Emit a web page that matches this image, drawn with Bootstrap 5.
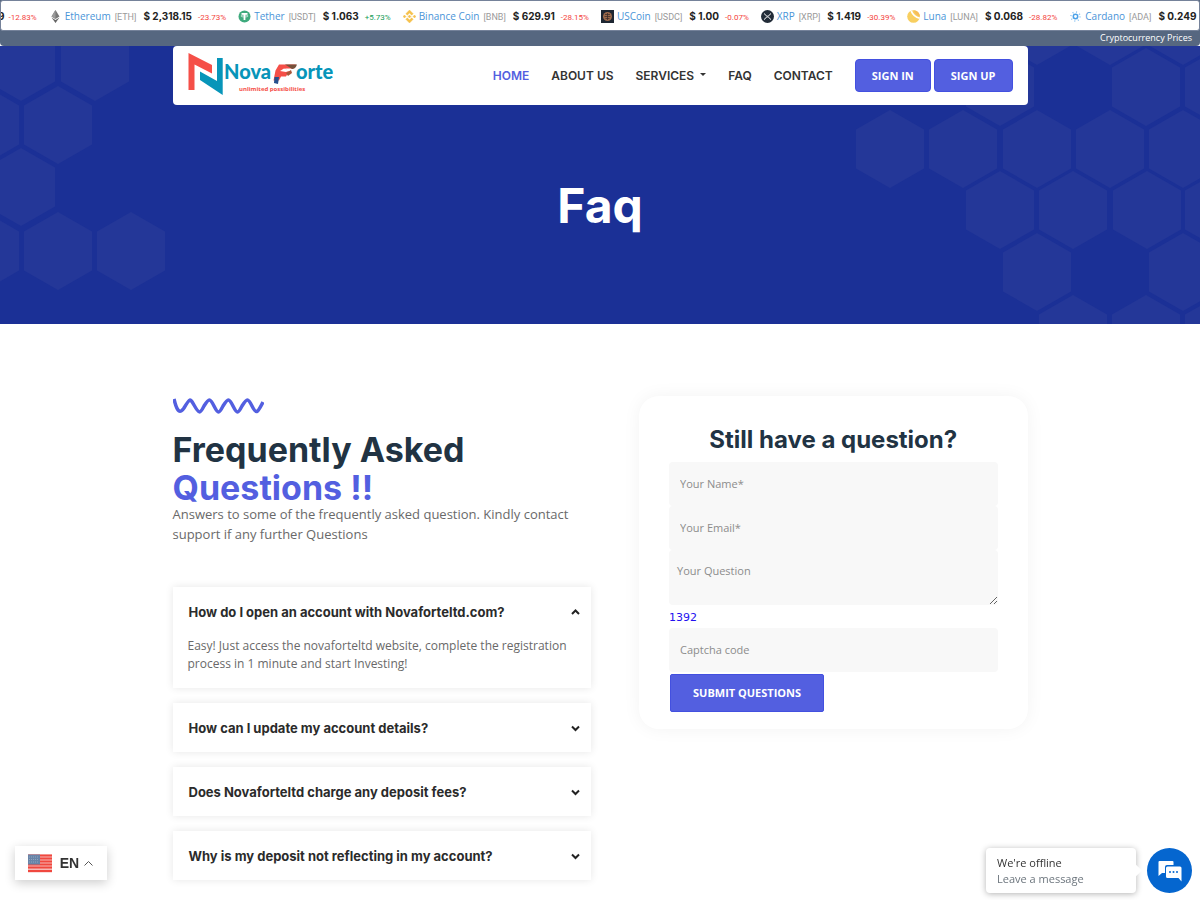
<!DOCTYPE html>
<html lang="en">
<head>
<meta charset="utf-8">
<meta name="viewport" content="width=device-width, initial-scale=1">
<title>NovaForte - Faq</title>
<link href="https://cdn.jsdelivr.net/npm/bootstrap@5.3.0/dist/css/bootstrap.min.css" rel="stylesheet">
<style>
:root{--brand:#535fe0;--ink:#213343;--text:#696969;--deep:#1b3096}
body{font-family:"Open Sans","Noto Sans",sans-serif;font-size:13px;color:var(--text);background:#fff}
.wrap{width:100%;max-width:855px;margin-inline:auto}
a{text-decoration:none}

/* price ticker */
.ticker{background:#566780;border-radius:0 0 4px 4px}
.ticker-track{height:31px;background:#fff;border:1px solid #75829a;border-radius:3px;overflow:hidden;white-space:nowrap;padding-top:2px}
.coin{flex:none;line-height:14px}
.coin:first-child{margin-left:-3px}
.coin svg{width:13px;height:13px;margin-right:3px}
.coin a{font-size:10px;color:#4a94d8;margin-right:4px}
.coin .sym{font-size:9px;font-family:Roboto,sans-serif;color:#9a9a9a;margin-right:7px}
.coin .price{font-family:Inter,sans-serif;font-size:10px;font-weight:700;color:#222;margin-right:6px}
.coin:first-child .price{margin-right:4px}
.coin .chg{font-family:Roboto,sans-serif;font-size:8px;color:#f4433c}
.coin .chg.up{color:#159c56}
.ticker-foot{height:15px;line-height:14px;font-size:9px;color:#fff;text-align:right;padding-right:8px}

/* hero */
.hero{background:var(--deep);height:278px;overflow:hidden}
.hexes{position:absolute;top:0;height:278px;fill:#243798}
.topnav{height:59px;padding:0 15px;border-radius:4px;background:#fff;position:relative}
.topnav .nav-link{padding:0;font:600 12px/20px Inter,sans-serif;color:#333}
.topnav .nav-link.active{color:var(--brand)}
.topnav .dropdown-toggle::after{margin-left:6px}
.topnav .menu{gap:22px}
.btn-brand{background:var(--brand);border:1px solid #4350e0;color:#fff;font-weight:700;border-radius:4px}
.btn-brand:hover{background:#4350e0;color:#fff}
.btn-sign{font-size:11px;height:33px;padding:0 16px;line-height:30px}
.sign-pair{gap:3px}
.hero h1{font:700 48px/58px Inter,sans-serif;color:#fff;margin:72px 0 0;text-align:center;position:relative}

/* faq */
.faq-grid{display:grid;grid-template-columns:418fr 388fr;gap:48px;padding:72px 0 20px;align-items:start}
.faq-grid h2{font:700 34px/38px Inter,sans-serif;color:var(--ink);margin:16px 0 0}
.faq-grid h2 span{color:var(--brand)}
.lead-in{line-height:20px;margin:-3px 0 43px}
.faq-item{border:0;border-radius:0;box-shadow:0 0 8px rgba(0,0,0,.1);background:#fff}
.faq-item+.faq-item{margin-top:15px}
.faq-q{height:49px;width:100%;border:0;background:none;padding:0 10px 0 16px;font:700 13px/20px Inter,sans-serif;color:#2b2b2b;text-align:left}
.faq-a{font-size:12px;line-height:18px;padding:1px 15px 15px}
.ask{border-radius:20px;box-shadow:0 0 18px rgba(0,0,0,.05);padding:30px 30px 17px;background:#fff}
.ask h3{font:700 24px/28px Inter,sans-serif;color:var(--ink);text-align:center;margin:0 0 8px}
.ask .form-control{background:#f8f8f8;border:0;border-radius:4px;font-size:11px;height:44px;padding:0 11px 2px}
.ask textarea.form-control{height:55px;min-height:55px;padding:12px 8px;line-height:18px;display:block}
.ask .form-control::placeholder{color:#8c8c8c;opacity:1}
.captcha{display:block;font:11px/23px "DejaVu Sans",sans-serif;color:#2310f0;height:23px;padding-top:1px}
.btn-send{font-size:11px;height:38px;border-radius:2px;padding:0 22px;margin:2px 0 0 1px}

/* floating widgets */
.lang{position:fixed;left:15px;bottom:20px;height:34px;width:92px;border:0;background:#fff;box-shadow:0 3px 10px rgba(0,0,0,.2);font:700 14px/20px "Liberation Sans",sans-serif;color:#333}
.chat{position:fixed;right:8px;bottom:7px;gap:11px}
.chat-note{width:150px;height:45px;border-radius:4px;background:#fff;box-shadow:0 1px 6px rgba(0,0,0,.3);padding:7px 11px;line-height:16px;font-size:11px;color:#333;position:relative}
.chat-note::after{content:"";position:absolute;right:-4px;top:18px;width:9px;height:9px;background:#fff;transform:rotate(45deg)}
.chat-btn{width:45px;height:45px;border:0;border-radius:50%;background:#0566cf}
</style>
</head>
<body>
<div class="ticker">
  <div class="ticker-track d-flex align-items-center">
    <div class="coin"><span class="price">9</span><span class="chg">-12.83%</span></div>
    <div class="coin ms-2 ps-1"><svg viewBox="0 0 13 13"><path d="M6.500 0 10.500 6.600 6.500 9 2.500 6.600Z" fill="#777"/><path d="M6.500 0V9L2.500 6.600Z" fill="#9a9a9a"/><path d="M2.500 7.500 6.500 10l4-2.500-4 5.500Z" fill="#666"/></svg><a href="#">Ethereum</a><span class="sym">[ETH]</span><span class="price">$ 2,318.15</span><span class="chg">-23.73%</span></div>
    <div class="coin ms-2 ps-1"><svg viewBox="0 0 13 13"><circle cx="6.500" cy="6.500" r="6" fill="#3eaa7d"/><path d="M3.500 3h6v1.700H7.400V10H5.600V4.700H3.500Z" fill="#fff"/><ellipse cx="6.500" cy="6" rx="3.600" ry="1" fill="none" stroke="#fff" stroke-width=".6"/></svg><a href="#">Tether</a><span class="sym">[USDT]</span><span class="price">$ 1.063</span><span class="chg up">+5.73%</span></div>
    <div class="coin ms-2 ps-1"><svg viewBox="0 0 13 13" fill="#f6c14b" stroke="#f6c14b" stroke-width=".4"><path d="m6.500 0 3.700 3.700-1.500 1.500-2.200-2.200-2.200 2.200-1.500-1.500ZM1.500 5l1.500 1.500L1.500 8 0 6.500ZM11.500 5 13 6.500 11.500 8 10 6.500ZM6.500 5 8 6.500 6.500 8 5 6.500ZM6.500 13 2.800 9.300l1.500-1.500L6.500 10l2.200-2.200 1.500 1.500Z"/></svg><a href="#">Binance Coin</a><span class="sym">[BNB]</span><span class="price">$ 629.91</span><span class="chg">-28.15%</span></div>
    <div class="coin ms-2 ps-1"><svg viewBox="0 0 13 13"><path d="M0 0h13v13H0z" fill="#1d2632"/><circle cx="6.500" cy="6.500" r="4.500" fill="#9b694b"/><path d="M4 4.500h5M3.500 6.500h6M4.500 8.500h4M6.500 3v7" stroke="#3a2b28" stroke-width=".7"/></svg><a href="#">USCoin</a><span class="sym">[USDC]</span><span class="price">$ 1.00</span><span class="chg">-0.07%</span></div>
    <div class="coin ms-2 ps-1"><svg viewBox="0 0 13 13"><circle cx="6.500" cy="6.500" r="6.500" fill="#222c38"/><path d="M3 3.500 5.300 5.700q1.200 1 2.400 0L10 3.500M3 9.600l2.300-2.200q1.200-1 2.400 0L10 9.600" fill="none" stroke="#fff" stroke-width="1"/></svg><a href="#">XRP</a><span class="sym">[XRP]</span><span class="price">$ 1.419</span><span class="chg">-30.39%</span></div>
    <div class="coin ms-2 ps-1"><svg viewBox="0 0 13 13"><circle cx="6.500" cy="6.500" r="6.300" fill="#f8cf60"/><path d="M3.500 1.500Q6 7.500 12.500 9L13 7.500Q7 6 5 .5Z" fill="#fff"/><path d="M6.500.3Q8 5 13 6.500A7 7 0 0 0 6.500.3Z" fill="#f6bd58"/></svg><a href="#">Luna</a><span class="sym">[LUNA]</span><span class="price">$ 0.068</span><span class="chg">-28.82%</span></div>
    <div class="coin ms-2 ps-1"><svg viewBox="0 0 13 13" fill="none" stroke="#4aa1e8"><circle cx="6.500" cy="6.500" r="2.200" stroke-width="1.500"/><circle cx="6.500" cy="6.500" r="4.500" stroke-dasharray="1 2.530" stroke-width="1.600" stroke="#8cc4f2"/></svg><a href="#">Cardano</a><span class="sym">[ADA]</span><span class="price">$ 0.249</span><span class="chg">-31.06%</span></div>
  </div>
  <div class="ticker-foot">Cryptocurrency Prices</div>
</div>

<header class="hero position-relative">
  <svg width="0" height="0" class="position-absolute"><defs><path id="hex" d="M0-39 34-19.500v39L0 39-34 19.500v-39Z"/></defs></svg>
  <svg class="hexes start-0" width="170" viewBox="0 46 170 278">
    <use href="#hex" x="21" y="62"/><use href="#hex" x="95" y="62"/><use href="#hex" x="-15" y="125"/><use href="#hex" x="58" y="125"/><use href="#hex" x="21" y="187"/><use href="#hex" x="-15" y="251"/><use href="#hex" x="58" y="251"/><use href="#hex" x="131" y="251"/>
  </svg>
  <svg class="hexes end-0" width="350" viewBox="850 46 350 278">
    <use href="#hex" x="1037" y="26"/><use href="#hex" x="1110" y="26"/><use href="#hex" x="1183" y="26"/>
    <use href="#hex" x="1000" y="87"/><use href="#hex" x="1146" y="87"/><use href="#hex" x="1219" y="87"/>
    <use href="#hex" x="890" y="149"/><use href="#hex" x="963" y="149"/><use href="#hex" x="1037" y="149"/><use href="#hex" x="1110" y="149"/><use href="#hex" x="1183" y="149"/>
    <use href="#hex" x="1000" y="210"/><use href="#hex" x="1073" y="210"/><use href="#hex" x="1147" y="210"/><use href="#hex" x="1219" y="210"/>
    <use href="#hex" x="1037" y="272"/><use href="#hex" x="1183" y="272"/>
    <use href="#hex" x="1073" y="334"/><use href="#hex" x="1146" y="334"/><use href="#hex" x="1219" y="334"/>
  </svg>
  <nav class="topnav wrap d-flex align-items-center justify-content-between" aria-label="Main">
    <a href="#" aria-label="NovaForte">
      <svg width="148" height="46" viewBox="188 53 148 46" class="d-block">
        <path d="M187.500 53 211 65v8.500l-17.500-9V90h-6Z" fill="#f54f48" transform="translate(1)"/>
        <path d="M199 71.500 216 81V58h5.700v37L199 80Z" fill="#0795b9" transform="translate(1)"/>
        <g font-family="Lato,sans-serif" font-weight="900" font-size="20" fill="#0795b9"><text x="224" y="79">Nova</text><text x="296" y="79">orte</text></g>
        <path d="M279 64.500h17l-3 4h-8l4 3-3 5h-5l-2 4h-5.500l2-10Z" fill="#f54f48"/>
        <path d="M285 64.500h12q-1.500 4.500-5 4.500l-3-2Z" fill="#76513b"/>
        <path d="m286 73 5-3 1 3-4 3Z" fill="#a8573b"/>
        <path d="m280 71 4-2.500 6 2-4 1.500Z" fill="#fff"/>
        <path d="M274.500 77h4.500l-1 7-4-1Z" fill="#254f8d"/>
        <text x="239" y="91" font-family="Open Sans,sans-serif" font-size="6" font-weight="700" fill="#f54f48">unlimited possibilities</text>
      </svg>
    </a>
    <div class="menu d-flex align-items-center">
      <a class="nav-link active" href="#">HOME</a>
      <a class="nav-link" href="#">ABOUT US</a>
      <a class="nav-link dropdown-toggle" href="#">SERVICES</a>
      <a class="nav-link" href="#">FAQ</a>
      <a class="nav-link" href="#">CONTACT</a>
      <div class="d-flex sign-pair">
        <button class="btn btn-brand btn-sign">SIGN IN</button><button class="btn btn-brand btn-sign">SIGN UP</button>
      </div>
    </div>
  </nav>
  <h1>Faq</h1>
</header>

<main class="wrap faq-grid">
  <section>
    <svg class="d-block" width="91" height="19" viewBox="0 0 91 19"><path d="M1 3C4 16 7 18 11 12 17 2 17 2 21 9 26 18 27 18 31 10 36 2 37 2 41 10 45 18 46 18 50 10 55 2 56 2 60 10 64 18 65 18 69 10 74 2 75 2 79 10 83 18 84 18 90 6" fill="none" stroke="#535fe0" stroke-width="3.500"/></svg>
    <h2>Frequently Asked<br><span>Questions !!</span></h2>
    <p class="lead-in">Answers to some of the frequently asked question. Kindly contact<br>support if any further Questions</p>
    <div class="faq-item">
      <button class="faq-q d-flex align-items-center justify-content-between" aria-expanded="true">How do I open an account with Novaforteltd.com?<svg width="11" height="10" viewBox="0 0 11 10"><path d="m2 7 3.500-3.500L9 7" fill="none" stroke="#222" stroke-width="2"/></svg></button>
      <div class="faq-a">Easy! Just access the novaforteltd website, complete the registration process in 1 minute and start Investing!</div>
    </div>
    <div class="faq-item">
      <button class="faq-q d-flex align-items-center justify-content-between" aria-expanded="false">How can I update my account details?<svg width="11" height="10" viewBox="0 0 11 10"><path d="M2 3.500 5.500 7 9 3.500" fill="none" stroke="#222" stroke-width="2"/></svg></button>
    </div>
    <div class="faq-item">
      <button class="faq-q d-flex align-items-center justify-content-between" aria-expanded="false">Does Novaforteltd charge any deposit fees?<svg width="11" height="10" viewBox="0 0 11 10"><path d="M2 3.500 5.500 7 9 3.500" fill="none" stroke="#222" stroke-width="2"/></svg></button>
    </div>
    <div class="faq-item">
      <button class="faq-q d-flex align-items-center justify-content-between" aria-expanded="false">Why is my deposit not reflecting in my account?<svg width="11" height="10" viewBox="0 0 11 10"><path d="M2 3.500 5.500 7 9 3.500" fill="none" stroke="#222" stroke-width="2"/></svg></button>
    </div>
  </section>

  <form class="ask">
    <h3>Still have a question?</h3>
    <input class="form-control" type="text" placeholder="Your Name*" aria-label="Your Name">
    <input class="form-control" type="email" placeholder="Your Email*" aria-label="Your Email">
    <textarea class="form-control" placeholder="Your Question" aria-label="Your Question"></textarea>
    <label class="captcha" for="captcha">1392</label>
    <input class="form-control" id="captcha" type="text" placeholder="Captcha code">
    <button class="btn btn-brand btn-send" type="submit">SUBMIT QUESTIONS</button>
  </form>
</main>

<button class="lang d-flex align-items-center justify-content-center">
  <svg width="24" height="19" viewBox="0 0 24 19"><path d="M0 .5h24v18H0z" fill="#f7b9b6"/><path d="M0 1.500h24M0 4.500h24M0 7.500h24M0 10.500h24M0 13.500h24M0 17h24" stroke="#f0483f" stroke-width="2"/><path d="M0 .5h12v10H0z" fill="#6884a8"/><path d="M1 3h10M1 5.500h10M1 8h10" stroke="#8fa5be" stroke-dasharray="1 1"/></svg>
  <span class="ms-2">EN</span>
  <svg class="ms-1" width="11" height="8" viewBox="0 0 11 8"><path d="m1.500 6.500 4-4 4 4" fill="none" stroke="#555"/></svg>
</button>

<div class="chat d-flex align-items-center">
  <div class="chat-note"><div>We're offline</div><div class="text-secondary">Leave a message</div></div>
  <button class="chat-btn p-0" aria-label="Open chat"><svg class="d-block m-auto" width="24" height="22" viewBox="0 0 24 22"><path d="M1.500 1h13q1 0 1 1v3H9Q7 5 7 7v6H4l-3.500 3V2q0-1 1-1Z" fill="#fff"/><path d="M9.500 6.500h12.500q1.500 0 1.500 1.500v13.500L20.500 18h-11Q8 18 8 16.500V8q0-1.500 1.500-1.500Z" fill="#fff"/><g fill="#0566cf"><circle cx="12" cy="12" r="1"/><circle cx="15.500" cy="12" r="1"/><circle cx="19" cy="12" r="1"/></g></svg></button>
</div>
<script src="https://cdn.jsdelivr.net/npm/bootstrap@5.3.0/dist/js/bootstrap.bundle.min.js"></script>
</body>
</html>
